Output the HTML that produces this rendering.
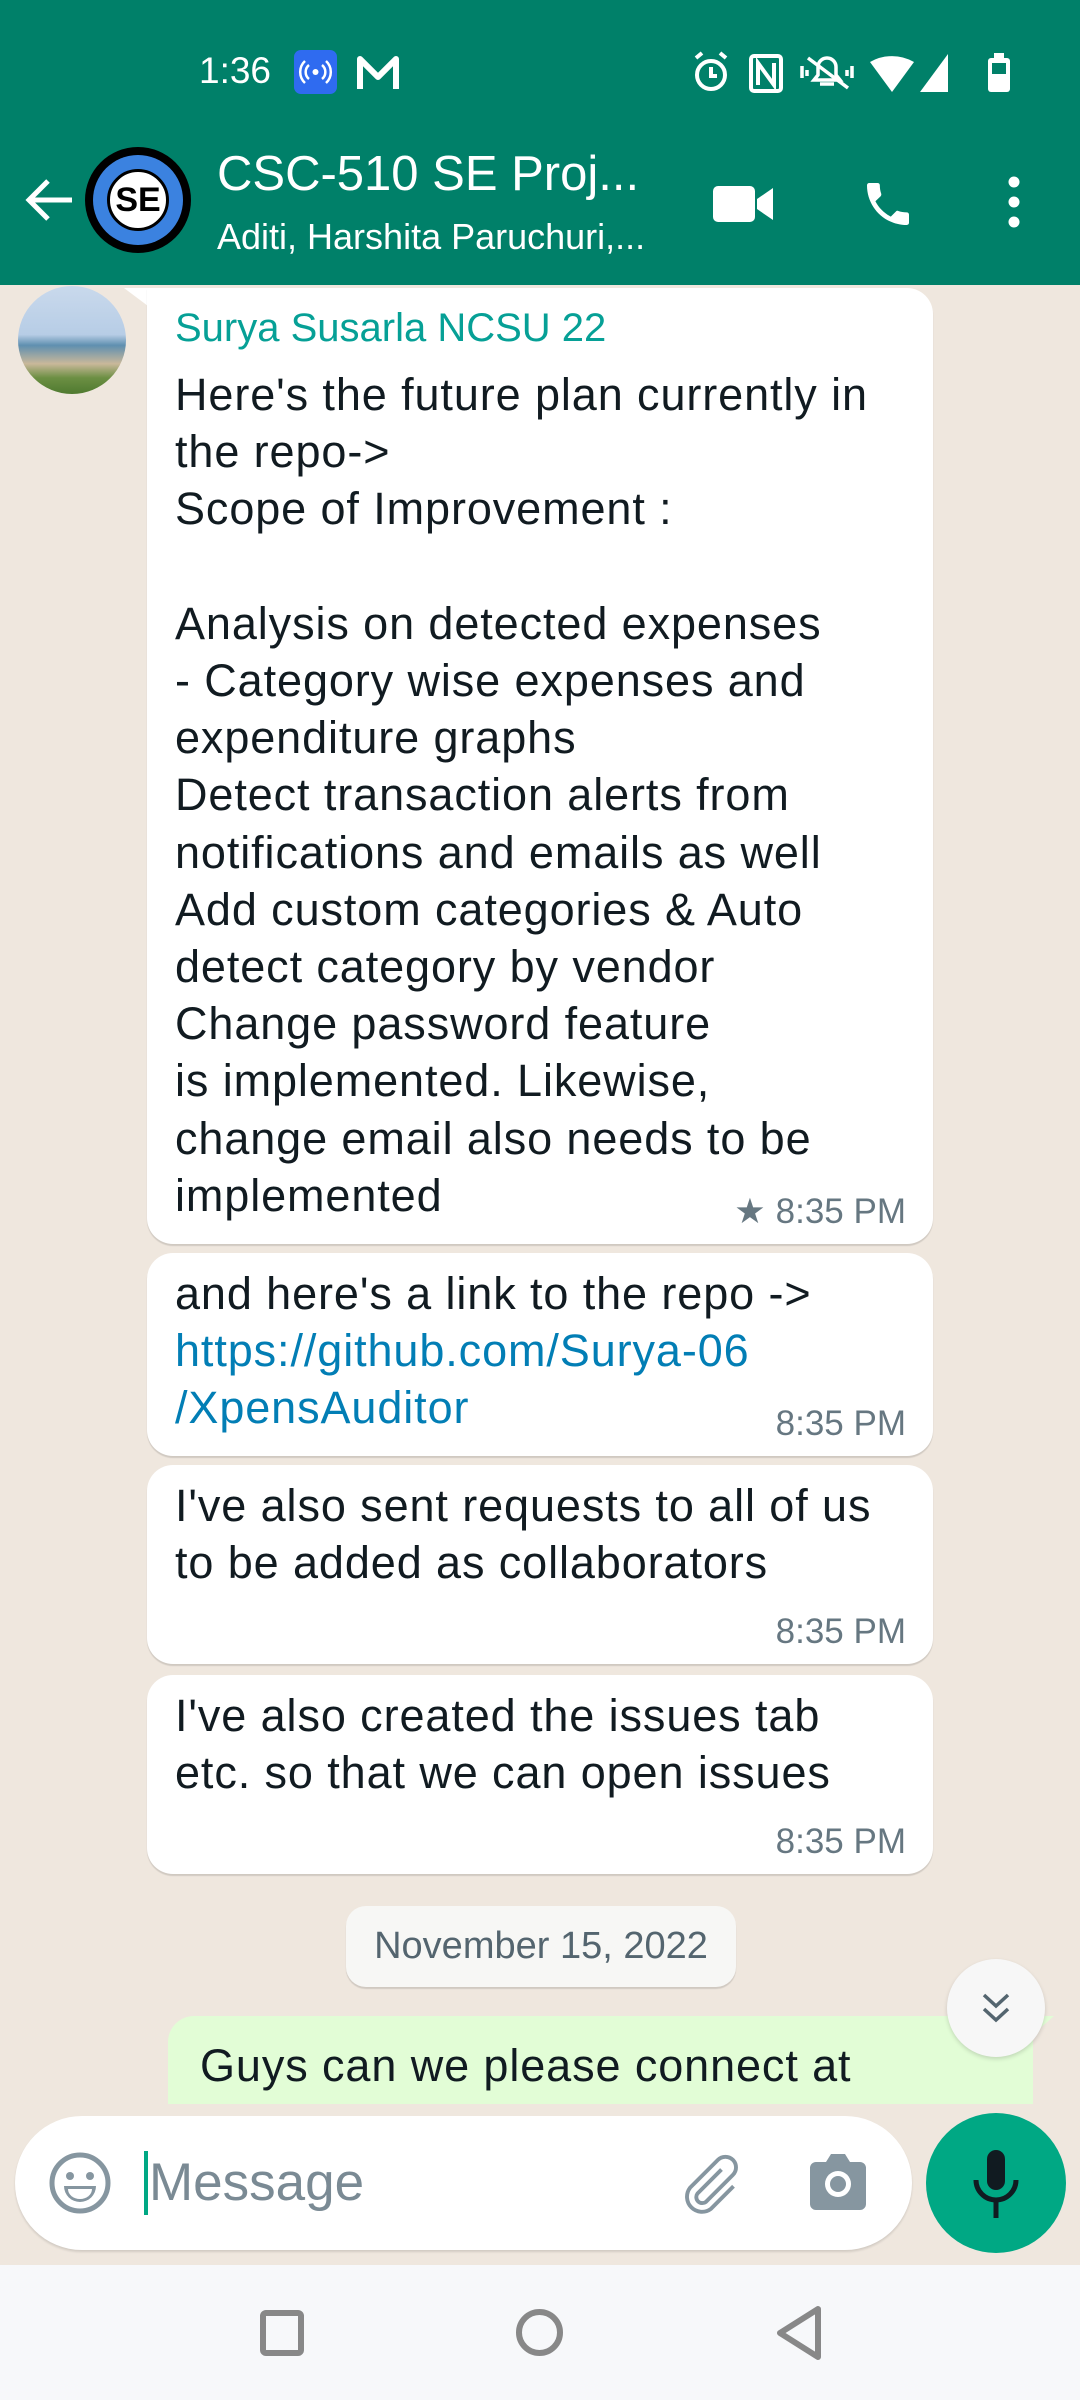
<!DOCTYPE html>
<html><head><meta charset="utf-8"><style>
*{margin:0;padding:0;box-sizing:border-box}
body{width:1080px;height:2400px;overflow:hidden;position:relative;background:#EFE7DE;font-family:"Liberation Sans",Arial,sans-serif}
.abs{position:absolute}
.hdr{left:0;top:0;width:1080px;height:285px;background:#008069}
.w{color:#fff}
.bub{position:absolute;background:#fff;border-radius:26px;box-shadow:0 2px 1px rgba(0,0,0,0.13)}
.txt{position:absolute;left:28px;font-size:45px;letter-spacing:0.9px;line-height:57.2px;color:#111b21;white-space:pre}
.tm{position:absolute;right:27px;font-size:35px;color:#667781}
</style></head><body>
<div class="abs hdr"></div>
<!-- status bar -->
<div class="abs w" style="left:199px;top:50px;font-size:37px">1:36</div>
<div class="abs" style="left:294px;top:50px;width:43px;height:44px;background:#2f6bf0;border-radius:7px"></div>
<svg class="abs" style="left:294px;top:50px" width="43" height="44" viewBox="0 0 43 44"><circle cx="21.5" cy="22" r="3" fill="#fff"/><path d="M15 15a9 9 0 0 0 0 14M28 15a9 9 0 0 1 0 14M11 11a15 15 0 0 0 0 22M32 11a15 15 0 0 1 0 22" stroke="#fff" stroke-width="2.5" fill="none"/></svg>
<svg class="abs" style="left:356px;top:55px" width="45" height="36" viewBox="0 0 45 36"><path d="M4 34V4l18 18L40 4v30" stroke="#fff" stroke-width="6" fill="none" stroke-linejoin="round"/></svg>
<svg class="abs" style="left:690px;top:50px" width="340" height="45" viewBox="0 0 340 45">
<circle cx="21" cy="25" r="14" stroke="#fff" stroke-width="4" fill="none"/><path d="M21 17v9h6M6 8l6-5M36 8l-6-5" stroke="#fff" stroke-width="4" fill="none"/>
<rect x="61" y="6" width="30" height="35" rx="3" stroke="#fff" stroke-width="4" fill="none"/><path d="M68 35V13l16 22V13" stroke="#fff" stroke-width="4" fill="none"/>
<path d="M124 30h26l-4-5v-8a9 9 0 0 0-18 0v8zM130 34h14M112 16v12M117 20v6M162 16v12M157 20v6" stroke="#fff" stroke-width="3.5" fill="none"/><path d="M118 8l40 30" stroke="#fff" stroke-width="3.5"/>
<path d="M180 12a44 44 0 0 1 44 0l-22 30z" fill="#fff"/>
<path d="M258 42V4L230 42z" fill="#fff"/>
<rect x="298" y="8" width="22" height="34" rx="3" fill="#fff"/><rect x="304" y="3" width="10" height="6" fill="#fff"/><rect x="302" y="13" width="14" height="11" fill="#008069"/>
</svg>
<!-- app bar -->
<svg class="abs" style="left:24px;top:177px" width="50" height="46" viewBox="0 0 50 46"><path d="M48 23H6M24 4L5 23l19 19" stroke="#fff" stroke-width="5" fill="none"/></svg>
<div class="abs" style="left:85px;top:147px;width:106px;height:106px;border-radius:50%;background:#000"></div>
<div class="abs" style="left:93px;top:155px;width:90px;height:90px;border-radius:50%;background:#3b82e0"></div>
<div class="abs" style="left:107px;top:169px;width:62px;height:62px;border-radius:50%;background:#fff;border:3px solid #000;font-weight:bold;font-size:34px;line-height:56px;text-align:center;color:#000">SE</div>
<div class="abs w" style="left:217px;top:146px;font-size:49px">CSC-510 SE Proj...</div>
<div class="abs w" style="left:217px;top:216px;font-size:36px">Aditi, Harshita Paruchuri,...</div>
<svg class="abs" style="left:713px;top:184px" width="62" height="40" viewBox="0 0 62 40"><rect x="0" y="2" width="42" height="36" rx="5" fill="#fff"/><path d="M44 15l16-11v32L44 25z" fill="#fff"/></svg>
<svg class="abs" style="left:860px;top:176px" width="56" height="56" viewBox="0 0 24 24"><path fill="#fff" d="M6.6 10.8c1.4 2.8 3.8 5.1 6.6 6.6l2.2-2.2c.3-.3.7-.4 1-.2 1.1.4 2.300.6 3.6.6.6 0 1 .4 1 1V20c0 .6-.4 1-1 1C10.6 21 3 13.4 3 4c0-.6.4-1 1-1h3.5c.6 0 1 .4 1 1 0 1.3.2 2.5.6 3.6.1.3 0 .7-.2 1z"/></svg>
<svg class="abs" style="left:1004px;top:176px" width="20" height="52" viewBox="0 0 20 52"><circle cx="10" cy="6" r="5.5" fill="#fff"/><circle cx="10" cy="26" r="5.5" fill="#fff"/><circle cx="10" cy="46" r="5.5" fill="#fff"/></svg>
<!-- avatar -->
<div class="abs" style="left:18px;top:286px;width:108px;height:108px;border-radius:50%;background:linear-gradient(180deg,#c9d9ec 0%,#b7cde6 45%,#5f8fb0 55%,#c9b89a 72%,#6c8f43 85%,#4f7a30 100%)"></div>
<!-- bubble 1 -->
<svg class="abs" style="left:124px;top:288px" width="40" height="30"><path d="M0 0H40V30z" fill="#fff"/></svg>
<div class="bub" style="left:147px;top:288px;width:786px;height:956px;border-top-left-radius:0">
<div class="abs" style="left:28px;top:18px;font-size:40px;color:#06a096">Surya Susarla NCSU 22</div>
<div class="txt" style="top:78px">Here's the future plan currently in
the repo->
Scope of Improvement :

Analysis on detected expenses
- Category wise expenses and
expenditure graphs
Detect transaction alerts from
notifications and emails as well
Add custom categories &amp; Auto
detect category by vendor
Change password feature
is implemented. Likewise,
change email also needs to be
implemented</div>
<div class="tm" style="bottom:12px"><span style="margin-right:10px">★</span>8:35 PM</div>
</div>
<div class="bub" style="left:147px;top:1253px;width:786px;height:203px">
<div class="txt" style="top:12px">and here's a link to the repo -&gt;
<span style="color:#027eb5">https://github.com/Surya-06
/XpensAuditor</span></div>
<div class="tm" style="bottom:12px">8:35 PM</div></div>
<div class="bub" style="left:147px;top:1465px;width:786px;height:199px">
<div class="txt" style="top:12px">I've also sent requests to all of us
to be added as collaborators</div>
<div class="tm" style="bottom:12px">8:35 PM</div></div>
<div class="bub" style="left:147px;top:1675px;width:786px;height:199px">
<div class="txt" style="top:12px">I've also created the issues tab
etc. so that we can open issues</div>
<div class="tm" style="bottom:12px">8:35 PM</div></div>
<!-- date -->
<div class="bub" style="left:346px;top:1906px;width:390px;height:81px;border-radius:20px;background:#f7f7f5;text-align:center;font-size:38px;line-height:81px;color:#54656f">November 15, 2022</div>
<!-- green bubble -->
<div class="abs" style="left:168px;top:2016px;width:865px;height:88px;background:#e2fdd6;border-radius:26px 0 0 0;overflow:hidden">
<div class="abs" style="left:32px;top:24px;font-size:45px;letter-spacing:0.9px;color:#111b21">Guys can we please connect at</div></div>
<svg class="abs" style="left:1020px;top:2016px" width="34" height="30"><path d="M0 0H34L0 30z" fill="#e2fdd6"/></svg>
<div class="abs" style="left:947px;top:1959px;width:98px;height:98px;border-radius:50%;background:#f7f7f7;box-shadow:0 2px 4px rgba(0,0,0,0.15)"></div>
<svg class="abs" style="left:978px;top:1990px" width="36" height="36" viewBox="0 0 36 36"><path d="M6 5l12 11L30 5M6 19l12 11 12-11" stroke="#54656f" stroke-width="3.5" fill="none"/></svg>
<!-- input -->
<div class="abs" style="left:15px;top:2116px;width:897px;height:134px;border-radius:67px;background:#fff;box-shadow:0 2px 2px rgba(0,0,0,0.12)"></div>
<svg class="abs" style="left:47px;top:2150px" width="66" height="66" viewBox="0 0 66 66"><circle cx="33" cy="33" r="28" stroke="#8696a0" stroke-width="5" fill="none"/><circle cx="23" cy="26" r="4" fill="#8696a0"/><circle cx="43" cy="26" r="4" fill="#8696a0"/><path d="M17 36h32a16 16 0 0 1-32 0z" fill="#8696a0"/><path d="M21 39h24a12 10 0 0 1-24 0z" fill="#fff"/></svg>
<div class="abs" style="left:144px;top:2151px;width:4px;height:64px;background:#00a884"></div>
<div class="abs" style="left:149px;top:2152px;font-size:53px;color:#7a8a94">Message</div>
<svg class="abs" style="left:672px;top:2150px" width="72" height="72" viewBox="0 0 24 24"><path fill="none" stroke="#8696a0" stroke-width="1.3" d="M16.5 6.5l-8 8a2 2 0 0 0 2.8 2.8l9-9a3.5 3.5 0 0 0-5-5l-9.3 9.3a5 5 0 0 0 7 7l7.5-7.5"/></svg>
<svg class="abs" style="left:806px;top:2150px" width="64" height="64" viewBox="0 0 64 64"><path d="M4 18a6 6 0 0 1 6-6h10l5-8h14l5 8h10a6 6 0 0 1 6 6v36a6 6 0 0 1-6 6H10a6 6 0 0 1-6-6z" fill="#8696a0"/><circle cx="32" cy="34" r="13" fill="#fff"/><circle cx="32" cy="34" r="8" fill="#8696a0"/></svg>
<div class="abs" style="left:926px;top:2113px;width:140px;height:140px;border-radius:50%;background:#00a884"></div>
<svg class="abs" style="left:966px;top:2148px" width="60" height="72" viewBox="0 0 60 72"><rect x="21" y="2" width="18" height="40" rx="9" fill="#111b21"/><path d="M10 32a20 20 0 0 0 40 0M30 52v18" stroke="#111b21" stroke-width="5" fill="none"/></svg>
<!-- nav -->
<div class="abs" style="left:0;top:2265px;width:1080px;height:135px;background:#f7f8fa"></div>
<div class="abs" style="left:260px;top:2310px;width:44px;height:46px;border:6px solid #888;border-radius:6px"></div>
<div class="abs" style="left:516px;top:2309px;width:47px;height:47px;border:6px solid #888;border-radius:50%"></div>
<svg class="abs" style="left:774px;top:2305px" width="50" height="56" viewBox="0 0 50 56"><path d="M44 4v48L6 28z" stroke="#888" stroke-width="6" fill="none" stroke-linejoin="round"/></svg>
</body></html>
